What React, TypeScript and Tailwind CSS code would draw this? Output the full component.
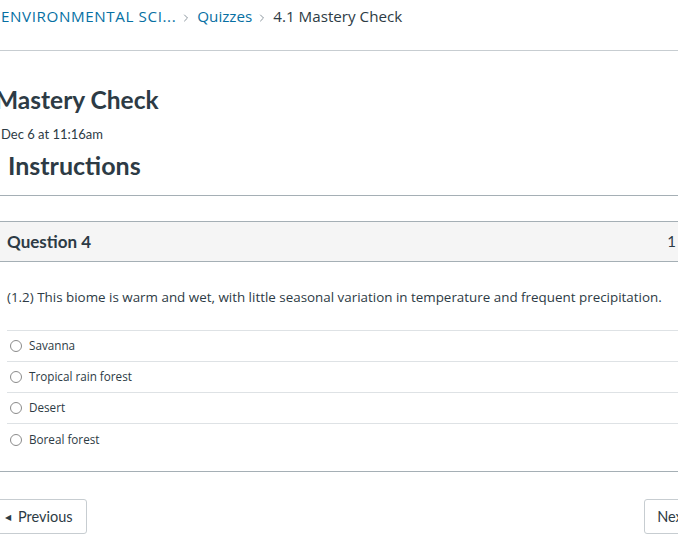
import { ChevronRight } from "lucide-react"

const ANSWERS = ["Savanna", "Tropical rain forest", "Desert", "Boreal forest"]

const rounded = { fontFamily: '"Open Sans", "Noto Sans", sans-serif' }

export default function App() {
  return (
    <div className="w-[678px] h-[560px] overflow-hidden bg-white text-[#2d3b45]" style={{ fontFamily: "Lato, sans-serif" }}>
      {/* breadcrumbs */}
      <nav className="h-[51px] border-b border-[#c7cdd1] flex items-start pt-[5px] pl-[1px] text-[15.2px]" style={rounded}>
        <a className="text-[#0770a3] tracking-[0.6px]">ENVIRONMENTAL SCI...</a>
        <ChevronRight className="w-3 h-3 ml-[4px] mr-[5px] mt-[7px] text-[#8b969e]" strokeWidth={2} />
        <a className="text-[#0770a3]">Quizzes</a>
        <ChevronRight className="w-3 h-3 ml-[4px] mr-[5px] mt-[7px] text-[#8b969e]" strokeWidth={2} />
        <span>4.1 Mastery Check</span>
      </nav>

      {/* quiz header */}
      <div className="pt-[35px]">
        <h1 className="-ml-[5px] text-[24.5px] font-bold leading-[28px] whitespace-nowrap">Mastery Check</h1>
        <div className="text-[13px] leading-[16px] mt-[12px] pl-[1px]">Dec 6 at 11:16am</div>
        <h2 className="pl-[8px] text-[25px] font-bold leading-[30px] mt-[8px] pb-[15px] border-b border-[#a5afb5]">Instructions</h2>
      </div>

      {/* question */}
      <div className="mt-[25px] border-y border-[#a5afb5]">
        <div className="h-[40px] bg-[#f5f5f5] border-b border-[#a5afb5] flex items-center justify-between pl-[7px] pr-[2px]">
          <span className="text-[17px] font-bold">Question 4</span>
          <span className="text-[15px] font-normal">1</span>
        </div>
        <div className="pl-[7px] pt-[27px]" style={rounded}>
          <p className="text-[13.4px] leading-[16px] pb-[25px] whitespace-nowrap">
            (1.2) This biome is warm and wet, with little seasonal variation in temperature and frequent precipitation.
          </p>
          <div className="border-t border-[#dee2e5]">
            {ANSWERS.map((a, i) => (
              <label
                key={a}
                className={`flex items-center h-[31px] ${i < ANSWERS.length - 1 ? "border-b border-[#dee2e5]" : ""}`}
              >
                <span className="w-[12px] h-[12px] ml-[3px] rounded-full border border-[#8b8b8b] bg-white" />
                <span className="ml-[7px] text-[11.7px]">{a}</span>
              </label>
            ))}
          </div>
          <div className="h-[16px]" />
        </div>
      </div>

      {/* nav buttons */}
      <div className="flex justify-between mt-[27px]">
        <button className="-ml-[10px] h-[35px] pl-[14px] pr-[13px] border border-[#c7cdd1] rounded-[3px] bg-white flex items-center text-[14.5px] text-[#2d3b45]">
          <span className="text-[8px] mr-[7px]">◀</span>Previous
        </button>
        <button className="-mr-[36px] h-[35px] pl-[12px] pr-[12px] border border-[#c7cdd1] rounded-[3px] bg-white flex items-center text-[14.5px] text-[#2d3b45] whitespace-nowrap">
          Next
          <span className="text-[8px] ml-[7px]">▶</span>
        </button>
      </div>
    </div>
  )
}
